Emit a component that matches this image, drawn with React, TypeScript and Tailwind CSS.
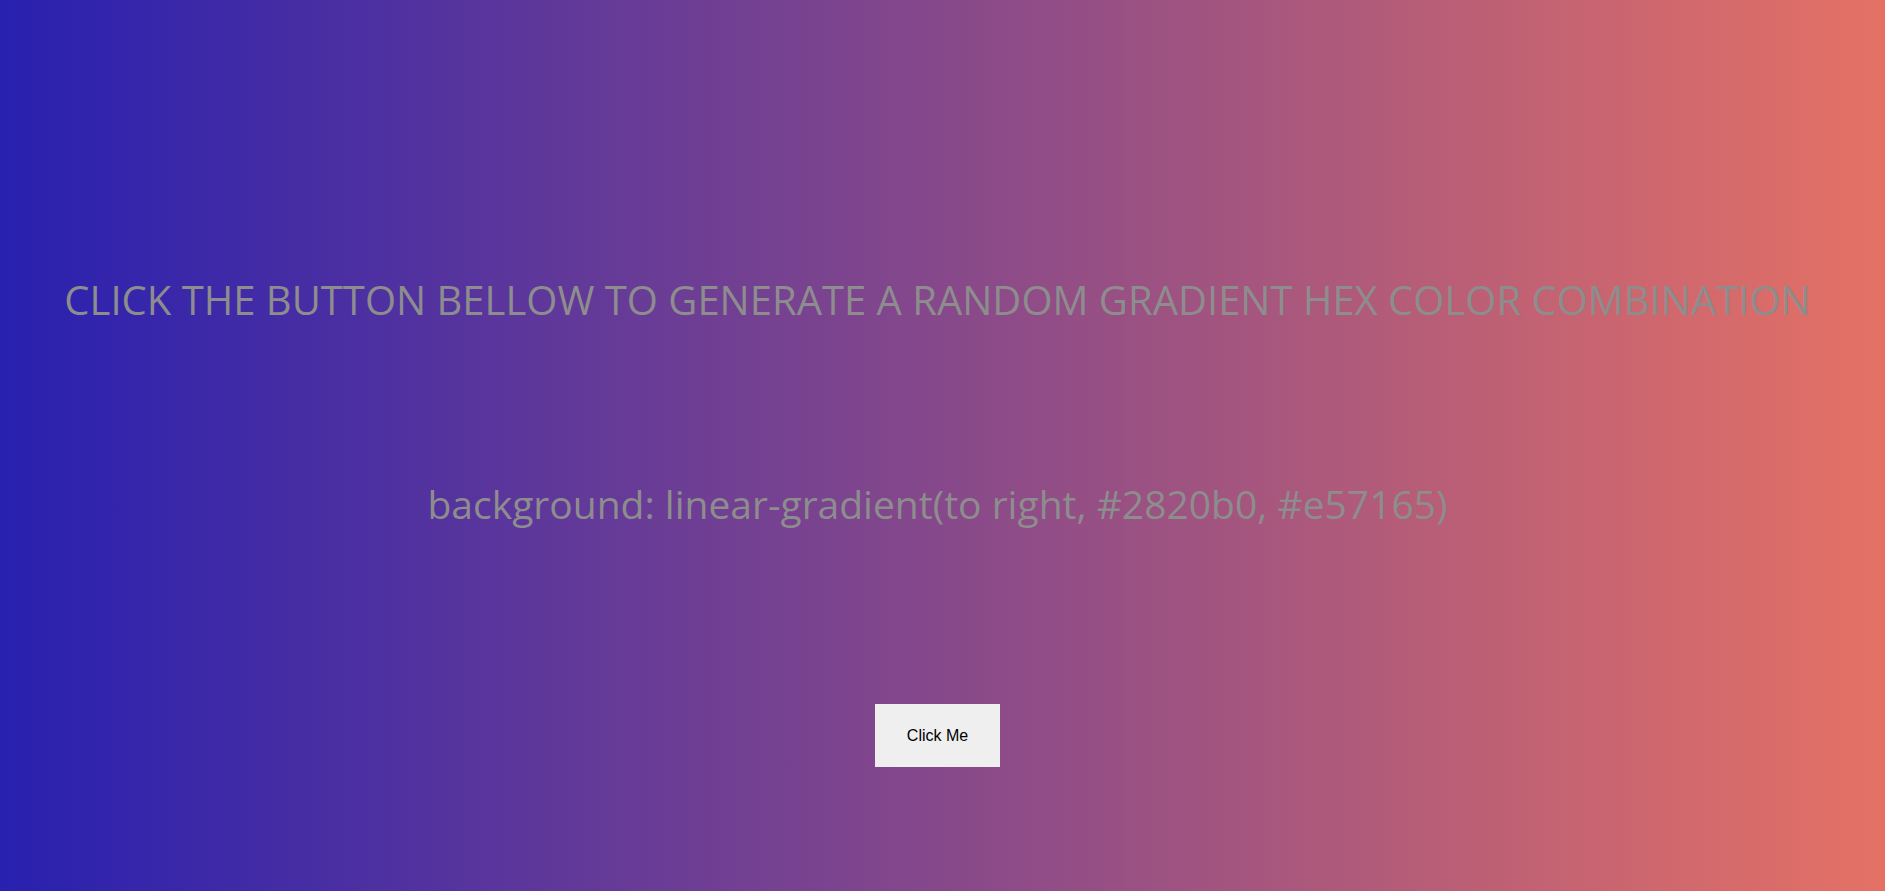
export default function App() {
  return (
    <div className="flex h-screen w-full flex-col items-center bg-[linear-gradient(to_right,#2820b0,#e57165)] pt-[276px] pr-[10px] font-['Open_Sans',sans-serif] text-[#8d8d8d]">
      <h1 className="text-[40px] leading-[48px] font-normal uppercase">
        Click the button bellow to generate a random gradient hex color combination
      </h1>
      <p className="mt-[156px] text-[39px] leading-[48px]">
        background: linear-gradient(to right, #2820b0, #e57165)
      </p>
      <button className="mt-[176px] h-[63px] w-[125px] bg-[#efefef] font-['Liberation_Sans',Arial,sans-serif] text-[16px] text-black">
        Click Me
      </button>
    </div>
  );
}
